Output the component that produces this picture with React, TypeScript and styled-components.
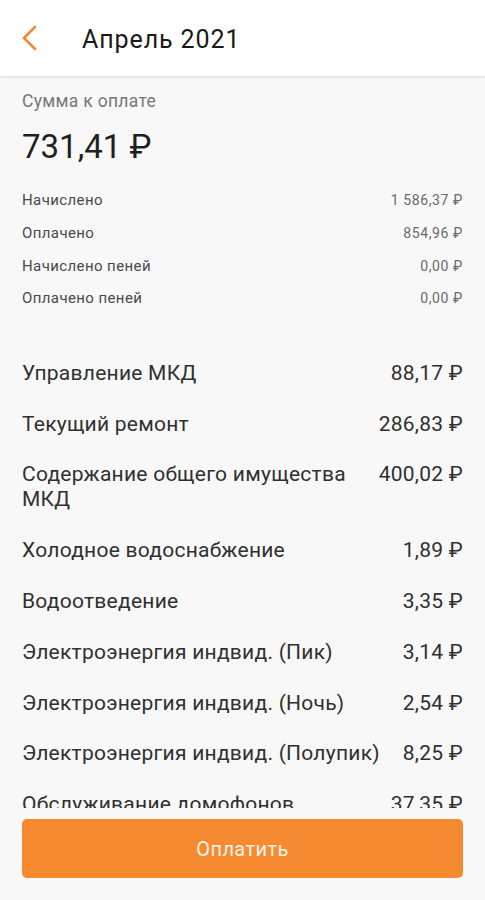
import React from "react";
import styled, { createGlobalStyle } from "styled-components";

const GlobalStyle = createGlobalStyle`
  html, body {
    margin: 0;
    padding: 0;
    height: 100%;
  }
  body {
    font-family: Roboto, "Noto Sans", "Liberation Sans", sans-serif;
    background: #f8f8f8;
    color: #212121;
  }
  #root {
    height: 100%;
  }
`;

const Screen = styled.div`
  height: 900px;
  display: flex;
  flex-direction: column;
  background: #f8f8f8;
  overflow: hidden;
`;

const Header = styled.header`
  height: 76px;
  flex-shrink: 0;
  display: flex;
  align-items: center;
  background: #ffffff;
  box-shadow: 0 1px 3px rgba(0, 0, 0, 0.12);
  position: relative;
  z-index: 1;
`;

const BackButton = styled.button`
  width: 82px;
  height: 76px;
  padding: 0 0 0 20px;
  border: none;
  background: transparent;
  display: flex;
  align-items: center;
  cursor: pointer;
`;

const Title = styled.h1`
  margin: 0;
  font-size: 25px;
  font-weight: 400;
  letter-spacing: 0.9px;
  color: #1a1a1a;
  padding-top: 3px;
`;

const Content = styled.main`
  flex: 1;
  overflow: hidden;
  padding: 14px 22px 0;
`;

const SumLabel = styled.div`
  font-size: 17.5px;
  letter-spacing: 0.3px;
  color: #777777;
  line-height: 22px;
`;

const SumValue = styled.div`
  font-size: 33px;
  color: #1f1f1f;
  line-height: 40px;
  margin-top: 15px;
`;

const Summary = styled.div`
  margin-top: 17px;
  display: flex;
  flex-direction: column;
`;

const SmallRow = styled.div`
  display: flex;
  justify-content: space-between;
  align-items: center;
  height: 32.7px;
`;

const SmallLabel = styled.span`
  font-size: 15px;
  letter-spacing: 0.4px;
  color: #4a4a4a;
`;

const SmallValue = styled.span`
  font-size: 14px;
  letter-spacing: 0.6px;
  color: #6a6a6a;
`;

const Charges = styled.div`
  margin-top: 46px;
  display: flex;
  flex-direction: column;
  gap: 25.8px;
`;

const ChargeRow = styled.div`
  display: flex;
  justify-content: space-between;
  align-items: flex-start;
  gap: 16px;
  font-size: 21px;
  letter-spacing: 0.25px;
  line-height: 25px;
  color: #303030;
`;

const ChargeName = styled.span`
  flex: 1;
`;

const ChargeSum = styled.span`
  white-space: nowrap;
`;

const Footer = styled.footer`
  flex-shrink: 0;
  padding: 11px 22px 22px;
  background: #f8f8f8;
`;

const PayButton = styled.button`
  width: 100%;
  height: 59px;
  border: none;
  border-radius: 5px;
  background: #f58a30;
  color: #fff4ea;
  font-family: Roboto, "Noto Sans", "Liberation Sans", sans-serif;
  font-size: 20px;
  letter-spacing: 0.4px;
  cursor: pointer;
`;

const summary = [
  ["Начислено", "1 586,37 ₽"],
  ["Оплачено", "854,96 ₽"],
  ["Начислено пеней", "0,00 ₽"],
  ["Оплачено пеней", "0,00 ₽"],
];

const charges = [
  ["Управление МКД", "88,17 ₽"],
  ["Текущий ремонт", "286,83 ₽"],
  ["Содержание общего имущества МКД", "400,02 ₽"],
  ["Холодное водоснабжение", "1,89 ₽"],
  ["Водоотведение", "3,35 ₽"],
  ["Электроэнергия индвид. (Пик)", "3,14 ₽"],
  ["Электроэнергия индвид. (Ночь)", "2,54 ₽"],
  ["Электроэнергия индвид. (Полупик)", "8,25 ₽"],
  ["Обслуживание домофонов", "37,35 ₽"],
];

const App: React.FC = () => {
  return (
    <>
      <GlobalStyle />
      <Screen>
        <Header>
          <BackButton type="button" aria-label="Назад">
            <svg width="18" height="26" viewBox="0 0 18 26">
              <path
                d="M15 2 L4 13 L15 24"
                fill="none"
                stroke="#f0883a"
                strokeWidth="2.6"
                strokeLinecap="round"
                strokeLinejoin="round"
              />
            </svg>
          </BackButton>
          <Title>Апрель 2021</Title>
        </Header>
        <Content>
          <SumLabel>Сумма к оплате</SumLabel>
          <SumValue>731,41 ₽</SumValue>
          <Summary>
            {summary.map(([name, value]) => (
              <SmallRow key={name}>
                <SmallLabel>{name}</SmallLabel>
                <SmallValue>{value}</SmallValue>
              </SmallRow>
            ))}
          </Summary>
          <Charges>
            {charges.map(([name, value]) => (
              <ChargeRow key={name}>
                <ChargeName>{name}</ChargeName>
                <ChargeSum>{value}</ChargeSum>
              </ChargeRow>
            ))}
          </Charges>
        </Content>
        <Footer>
          <PayButton type="button">Оплатить</PayButton>
        </Footer>
      </Screen>
    </>
  );
};

export default App;
